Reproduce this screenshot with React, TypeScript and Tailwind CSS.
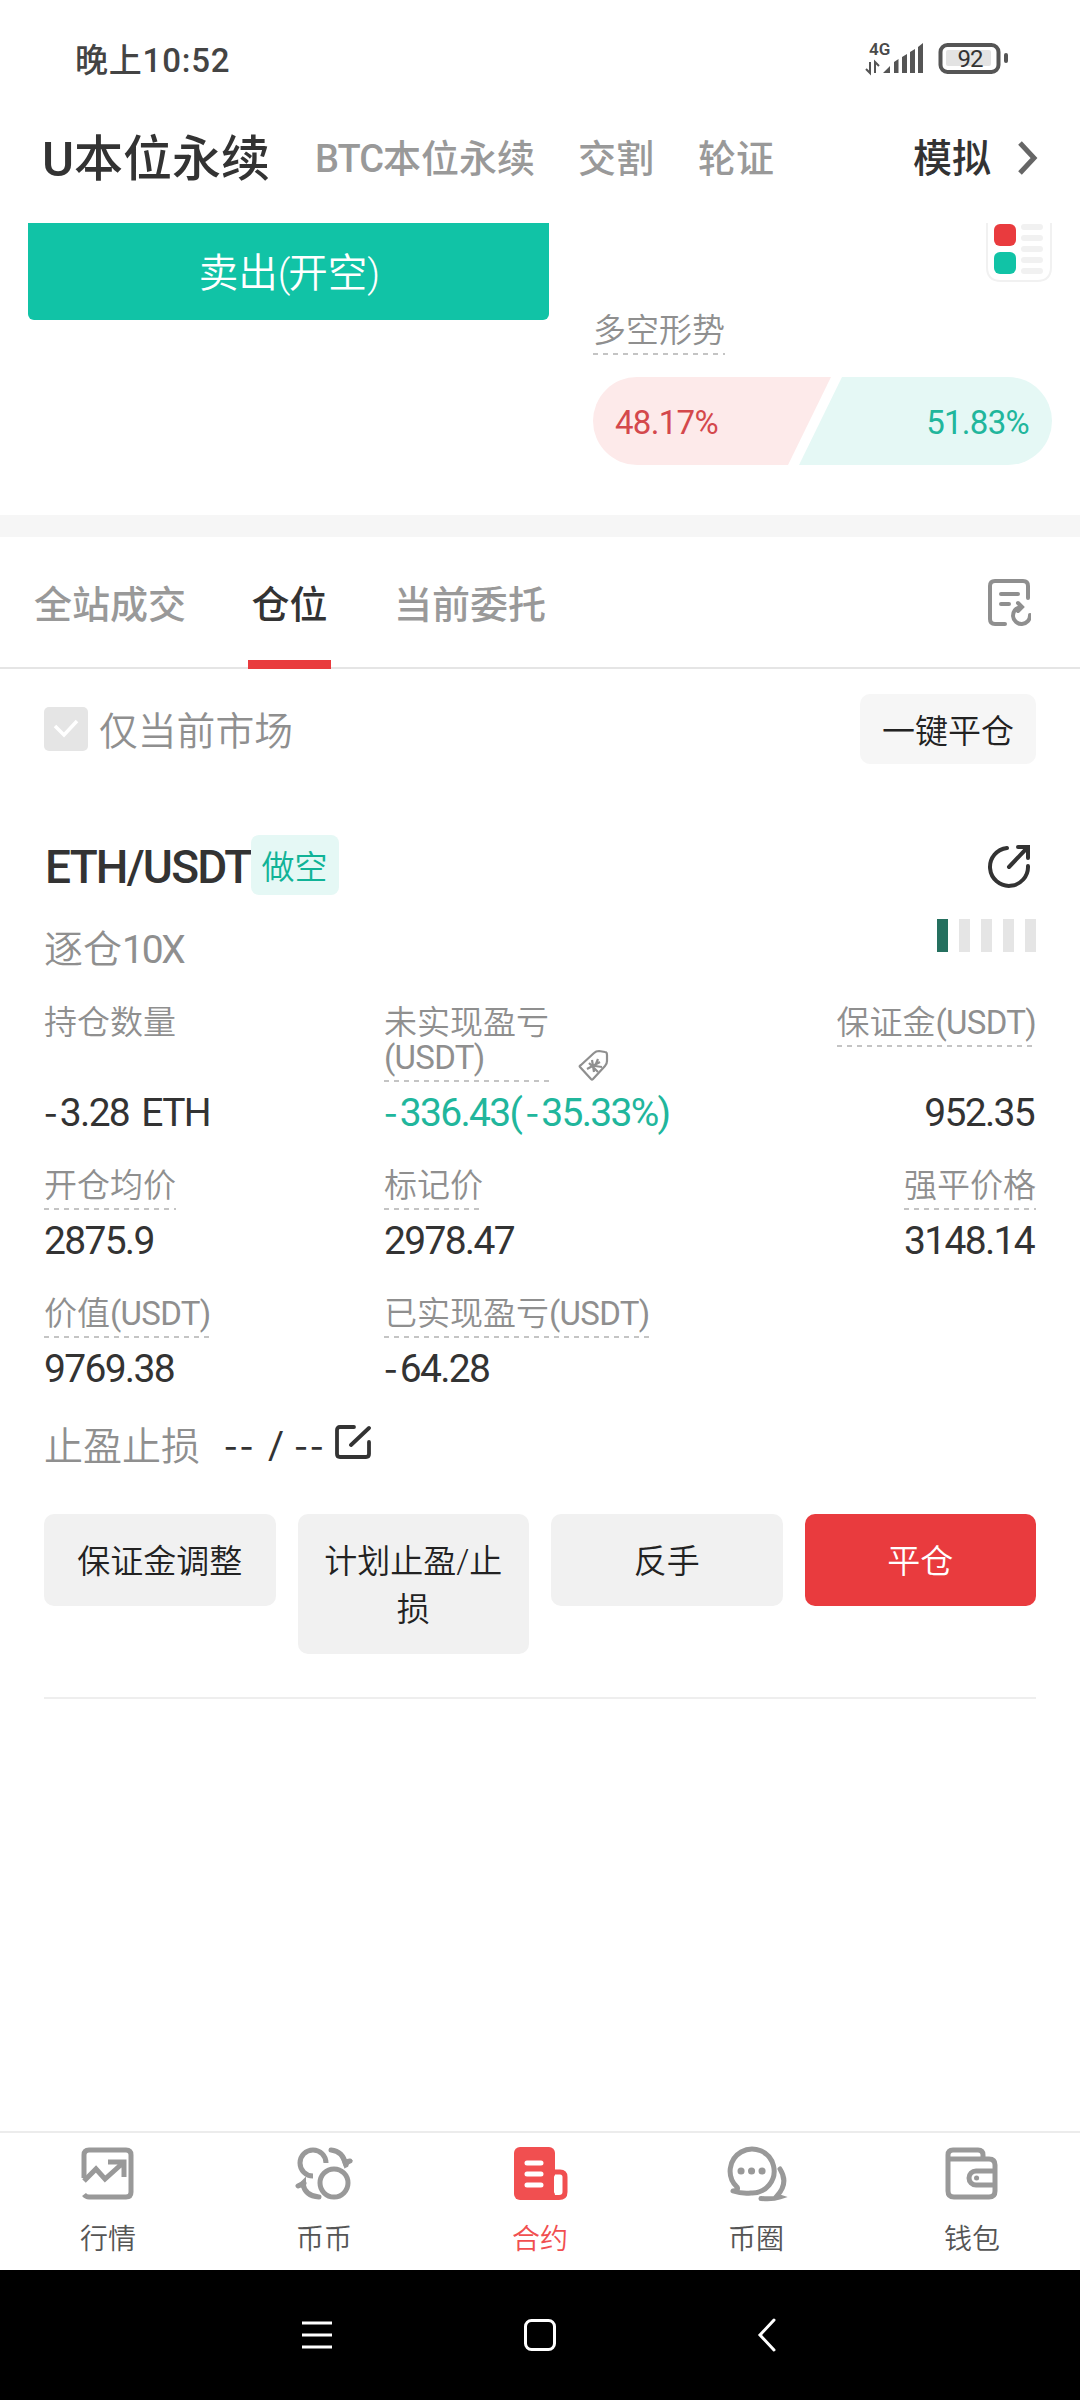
import React, {FC, ReactNode} from "react";

interface LabelProps {
    children: ReactNode;
    isDashed?: boolean;
}

interface CellProps {
    label: ReactNode;
    value: string;
    isDashed?: boolean;
    alignRight?: boolean;
    valueClass?: string;
    extra?: ReactNode;
}

const Usdt: FC = () => <span className="font-normal tracking-[-0.7px]">(USDT)</span>;

const Label: FC<LabelProps> = ({children, isDashed = true}) => (
    <div className="w-fit">
        <div className="text-[33px] leading-[35px] font-[350] text-[#8f8f8f]">{children}</div>
        {isDashed &&
            <div className="mt-[5px] h-[2px] bg-[repeating-linear-gradient(90deg,#c4c4c4_0_5px,transparent_5px_10px)]"></div>
        }
    </div>
);

// signs and brackets are set wider than the digits
const Value: FC<{ text: string }> = ({text}) => (
    <>
        {
            text.split(/([-() ])/).map((part, index) => {
                if (part === "-") {
                    return <span key={index} className="font-['Noto_Sans_CJK_SC',sans-serif] leading-[0px] tracking-[2.300px]">-</span>;
                }
                if (part === "(" || part === ")" || part === " ") {
                    return <span key={index} className="tracking-[2.500px]">{part}</span>;
                }
                return part;
            })
        }
    </>
);

const Cell: FC<CellProps> = ({label, value, isDashed = true, alignRight, valueClass = "text-[#333]", extra}) => (
    <div className={`flex flex-col justify-between gap-[11px] ${alignRight ? "items-end" : "items-start"}`}>
        <div className="flex items-end">
            <Label isDashed={isDashed}>{label}</Label>
            {extra}
        </div>
        <div className={`h-[40px] text-[39px] leading-[40px] tracking-[-1.7px] whitespace-nowrap ${alignRight ? "pr-[2px]" : ""} ${valueClass}`}>
            <Value text={value}/>
        </div>
    </div>
);

const StatusBar: FC = () => (
    <div className="flex h-[120px] shrink-0 items-center justify-between pl-[75px] pr-[71px]">
        <div className="pt-[2px] text-[33px] leading-[40px] font-medium tracking-[0.8px] text-[#444]">晚上10:52</div>
        <svg width="144" height="42" viewBox="0 -6 144 42" className="mt-[-7px]">
            <text x="4" y="13" fontSize="17" fontWeight="600" fill="#4a4a4a" fontFamily="Roboto, sans-serif">4G</text>
            <path d="M5 20v11l-4-4M10 31V20l4 4" fill="none" stroke="#555" strokeWidth="2"/>
            <path d="M18 31l7-7v7zM29 31V20l4.500-3v14zM37 31V15l5-3v19zM45 31V10l5-3v24zM53 31V5l5-4v30z" fill="#555"/>
            <rect x="75.500" y="3" width="58" height="27" rx="7" fill="#fff" stroke="#555" strokeWidth="4"/>
            <rect x="81" y="8" width="45" height="16" rx="2" fill="#e3e3e3"/>
            <rect x="139" y="11" width="4" height="10" rx="2" fill="#555"/>
            <text x="105" y="25" fontSize="24" textAnchor="middle" fill="#333"
                  fontFamily="Roboto, sans-serif" letterSpacing="-1">92</text>
        </svg>
    </div>
);

const Header: FC = () => (
    <div className="flex h-[103px] shrink-0 items-center pb-[25px] pl-[42px] pr-[41px] font-medium">
        <div className="pt-[2px] text-[49px] leading-[60px] text-[#333]">U本位永续</div>
        <div className="ml-[45px] text-[38px] leading-[60px] text-[#999]">
            <span className="tracking-[-1px]">BTC</span>本位永续
        </div>
        <div className="ml-[43px] text-[38px] leading-[60px] text-[#999]">交割</div>
        <div className="ml-[44px] text-[38px] leading-[60px] text-[#999]">轮证</div>
        <div className="ml-auto text-[39px] leading-[60px] text-[#333]">模拟</div>
        <svg width="22" height="34" viewBox="0 0 22 34" className="mt-[-2px] ml-[26px]">
            <path d="M3 2l14 15L3 32" fill="none" stroke="#666" strokeWidth="5"/>
        </svg>
    </div>
);

const OrderPanel: FC = () => (
    <div className="flex h-[292px] shrink-0 justify-between pl-[28px] pr-[28px]">
        <button className="h-[97px] w-[521px] rounded-b-md bg-[#11c3a6] pt-[4px] text-[39.500px] leading-[40px] font-[350] text-white">
            卖出<span className="tracking-[-2px]">(</span>开空<span className="tracking-[-2px]">)</span>
        </button>
        <div className="w-[459px]">
            <svg width="66" height="60" viewBox="0 0 66 60" className="ml-auto">
                <path d="M1 0v44q0 14 14 14h36q14 0 14-14V0" fill="#fff" stroke="#f1f1f1" strokeWidth="2"/>
                <rect x="8" y="1" width="22" height="22" rx="6" fill="#e93b3e"/>
                <rect x="8" y="29" width="22" height="22" rx="6" fill="#11c3a6"/>
                <path d="M38 4h16M38 15h16M38 26h16M38 37h16M38 48h16" stroke="#f1f1f1" strokeWidth="6"
                      strokeLinecap="round"/>
            </svg>
            <div className="mt-[30px]">
                <Label>多空形势</Label>
            </div>
            <div className="relative mt-[22px] h-[88px]">
                <svg width="459" height="88" viewBox="0 0 459 88">
                    <path d="M44 0H238L195 88H44A44 44 0 0 1 44 0z" fill="#fdeaea"/>
                    <path d="M249 0H415A44 44 0 0 1 415 88H206z" fill="#e5f8f5"/>
                </svg>
                <div className="absolute inset-0 flex items-center justify-between pl-[22px] pr-[23px] pt-1 text-[33px] leading-[40px] tracking-[-0.7px]">
                    <span className="text-[#d4484c]">48.17%</span>
                    <span className="text-[#21b69c]">51.83%</span>
                </div>
            </div>
        </div>
    </div>
);

const Tabs: FC = () => (
    <div className="flex h-[132px] shrink-0 items-stretch border-b-2 border-[#e5e5e5] pl-[34px] pr-[49px] text-[38px] font-medium text-[#999]">
        <div className="flex items-center pt-[6px]">全站成交</div>
        <div className="relative ml-[62px] flex w-[83px] items-center justify-center pt-[6px] text-[#333]">
            仓位
            <div className="absolute inset-x-0 bottom-[-2px] h-[9px] bg-[#e93b3e]"></div>
        </div>
        <div className="ml-[63px] flex items-center pt-[6px]">当前委托</div>
        <svg width="44" height="48" viewBox="0 0 44 48" className="ml-auto mt-[42px]" fill="none" stroke="#8f8f8f"
             strokeWidth="4" strokeLinecap="round">
            <path d="M18 45H8q-5 0-5-5V7q0-5 5-5h28q5 0 5 5v12"/>
            <path d="M14 15h17M14 25h8" />
            <path d="M35 28q-9 1-9 9a8.500 8.500 0 0 0 17-1M31 24l4 4-4 4"/>
        </svg>
    </div>
);

const MarketFilter: FC = () => (
    <div className="mt-[25px] flex h-[70px] shrink-0 items-center px-[44px]">
        <div className="flex size-[44px] items-center justify-center rounded-[5px] bg-[#e5e5e5]">
            <svg width="26" height="20" viewBox="0 0 26 20">
                <path d="M2 7l9 9L24 2" fill="none" stroke="#fff" strokeWidth="3.500"/>
            </svg>
        </div>
        <div className="ml-[11px] pt-[6px] text-[38.800px] leading-[44px] font-[350] text-[#8f8f8f]">仅当前市场</div>
        <button className="ml-auto h-[70px] w-[176px] rounded-[10px] bg-[#f6f6f6] pt-[5px] text-[33px] leading-[40px] font-[350] text-[#222]">
            一键平仓
        </button>
    </div>
);

const levels = [true, false, false, false, false];

const Position: FC = () => (
    <div className="mx-[44px] mt-[71px] flex shrink-0 flex-col border-b-2 border-[#eee] pb-[43px]">
        <div className="flex h-[60px] items-center">
            <div className="pt-[4px] pl-px text-[46px] leading-[56px] font-medium tracking-[-1.800px] text-[#333]">ETH/USDT</div>
            <div className="flex h-[60px] w-[88px] items-center justify-center rounded-[8px] bg-[#e5f8f5] pt-[6px] text-[33px] leading-[40px] font-[350] text-[#11b397]">
                做空
            </div>
            <svg width="44" height="46" viewBox="0 0 44 46" className="mt-[3px] ml-auto mr-[5px]" fill="none" stroke="#333"
                 strokeWidth="4" strokeLinecap="round">
                <path d="M20 4A19 19 0 1 0 41 22M22 23L40 4M31 3h10v11"/>
            </svg>
        </div>
        <div className="mt-[24px] flex h-[60px] items-start justify-between">
            <div className="pt-[9px] text-[39px] leading-[44px] font-[350] text-[#8f8f8f]">
                逐仓<span className="font-normal tracking-[-2.300px]">10X</span>
            </div>
            <div className="flex gap-[11px]">
                {
                    levels.map((active, index) => (
                        <div key={index} className={`h-[33px] w-[11px] ${active ? "bg-[#25705f]" : "bg-[#e5e5e5]"}`}></div>
                    ))
                }
            </div>
        </div>
        <div className="mt-[26px] grid grid-cols-[340px_1fr_auto] gap-y-[35px]">
            <Cell label="持仓数量" value="-3.28 ETH" isDashed={false}/>
            <Cell label={<>未实现盈亏<br/><Usdt/></>} value="-336.43(-35.33%)" valueClass="text-[#21b69c]"
                  extra={
                      <svg width="32" height="32" viewBox="0 0 32 32" className="mb-[1px] ml-[29px]" fill="none"
                           stroke="#8f8f8f" strokeWidth="2.200" strokeLinejoin="round">
                          <path d="M3 16L16 4q2-2 5-2l6 1q2 0 2 3v6q0 3-2 5L15 30q-1 1-2 0L2 18q-1-1 1-2z"/>
                          <path d="M11 14l9 9M9 20l13-7M14 11l2 12M20 10l-3 7 7 1"/>
                      </svg>
                  }/>
            <Cell label={<>保证金<Usdt/></>} value="952.35" alignRight={true}/>
            <Cell label="开仓均价" value="2875.9"/>
            <Cell label="标记价" value="2978.47"/>
            <Cell label="强平价格" value="3148.14" alignRight={true}/>
            <Cell label={<>价值<Usdt/></>} value="9769.38"/>
            <Cell label={<>已实现盈亏<Usdt/></>} value="-64.28"/>
        </div>
        <div className="mt-[35px] flex h-[44px] items-center">
            <div className="pt-[2px] text-[39px] leading-[44px] font-[350] text-[#8f8f8f]">止盈止损</div>
            <div className="ml-[24px] text-[39px] leading-[44px] tracking-[-2px] whitespace-nowrap text-[#333]">
                <Value text="-- / --"/>
            </div>
            <svg width="36" height="36" viewBox="0 0 36 36" className="mb-[9px] ml-[9px]" fill="none" stroke="#333"
                 strokeWidth="3.800" strokeLinecap="round">
                <path d="M19 3H5Q2 3 2 6v24q0 3 3 3h26q3 0 3-3V18M16 21L34 4"/>
            </svg>
        </div>
        <div className="mt-[46px] grid grid-cols-4 items-start gap-[22px] text-center text-[33px] leading-[48px] font-[350] text-[#222]">
            <button className="rounded-[10px] bg-[#f1f1f1] px-[20px] pt-[24px] pb-[20px]">保证金调整</button>
            <button className="rounded-[10px] bg-[#f1f1f1] px-[20px] pt-[24px] pb-[20px]">计划止盈/止<br/>损</button>
            <button className="rounded-[10px] bg-[#f1f1f1] px-[20px] pt-[24px] pb-[20px]">反手</button>
            <button className="rounded-[10px] bg-[#e93b3e] px-[20px] pt-[24px] pb-[20px] text-white">平仓</button>
        </div>
    </div>
);

const navItems = [
    {
        name: "行情",
        icon: (
            <>
                <path d="M4 33V10q0-5 5-5h37q5 0 5 5v37q0 5-5 5H9q-3 0-5-2.500"/>
                <path d="M4 36l12-12 9 10L44 17M28 17h16v15"/>
            </>
        ),
    },
    {
        name: "币币",
        icon: (
            <>
                <circle cx="38" cy="38" r="14"/>
                <path d="M30 18A13 13 0 1 0 17 31" />
                <path d="M35 5q12 1 15 15M49 17l5-1M2 41l6-3M7 39q2 12 16 13" strokeLinecap="round"/>
                <path d="M46 14l9 2-6 6zM9 42l-7-1 7-7z" fill="currentColor" strokeWidth="2"/>
            </>
        ),
    },
    {
        name: "合约",
        active: true,
        icon: (
            <>
                <rect x="2" y="2" width="41" height="53" rx="6" fill="currentColor" stroke="none"/>
                <path d="M36 27h12q5 0 5 5v15q0 5.500-6 5.500H36"/>
                <rect x="42" y="30" width="5" height="19" rx="2" fill="#fff" stroke="none"/>
                <path d="M15 18h14M15 29h14M15 40h14" stroke="#fff" strokeLinecap="round"/>
            </>
        ),
    },
    {
        name: "币圈",
        icon: (
            <>
                <path d="M9 42a22 22 0 1 1 14 6q-9 1-18-2 6-1 4-4z" strokeLinejoin="round"/>
                <path d="M52 24q9 14-3 27l3 1q-7 2.500-19 1.500" strokeLinecap="round"/>
                <path d="M13 26h.1M23.500 26h.1M34 26h.1" strokeWidth="7" strokeLinecap="round"/>
            </>
        ),
    },
    {
        name: "钱包",
        icon: (
            <>
                <path d="M4 14V46q0 6 6 6h35q6 0 6-6V20q0-6-6-6H4V10q0-5 5-5h25q5 0 5 5v4"/>
                <path d="M50 26H32a7 7 0 0 0 0 14h18"/>
                <path d="M32.500 33h.1" strokeLinecap="round"/>
            </>
        ),
    },
];

const BottomNav: FC = () => (
    <div className="mt-auto grid h-[139px] shrink-0 grid-cols-5 border-t-2 border-[#ececec]">
        {
            navItems.map((item) => (
                <div key={item.name}
                     className={`flex flex-col items-center pt-[12px] ${item.active ? "text-[#f14f50]" : "text-[#999]"}`}>
                    <svg width="56" height="56" viewBox="0 0 56 56" fill="none" stroke="currentColor" strokeWidth="5"
                         className="overflow-visible">
                        {item.icon}
                    </svg>
                    <div className={`mt-[21px] text-[28px] leading-[36px] font-[350] ${item.active ? "" : "text-[#555]"}`}>
                        {item.name}
                    </div>
                </div>
            ))
        }
    </div>
);

const SystemBar: FC = () => (
    <div className="flex h-[130px] shrink-0 items-center bg-black pl-[301px] pr-[303px]">
        <svg width="32" height="32" viewBox="0 0 32 32" stroke="#fff" strokeWidth="3">
            <path d="M1 4h30M1 16h30M1 28h30"/>
        </svg>
        <svg width="34" height="34" viewBox="0 0 34 34" className="ml-[190px]">
            <rect x="2.500" y="2.500" width="29" height="29" rx="6" fill="none" stroke="#fff" strokeWidth="3"/>
        </svg>
        <svg width="20" height="34" viewBox="0 0 20 34" className="ml-auto">
            <path d="M17 2L3 17l14 15" fill="none" stroke="#fff" strokeWidth="3" strokeLinecap="round"/>
        </svg>
    </div>
);

export default function App() {
    return (
        <div className="flex h-[2400px] w-[1080px] flex-col overflow-hidden bg-white font-[Roboto,'Noto_Sans_CJK_SC',sans-serif]">
            <StatusBar/>
            <Header/>
            <OrderPanel/>
            <div className="h-[22px] shrink-0 bg-[#f6f6f6]"></div>
            <Tabs/>
            <MarketFilter/>
            <Position/>
            <BottomNav/>
            <SystemBar/>
        </div>
    );
}
